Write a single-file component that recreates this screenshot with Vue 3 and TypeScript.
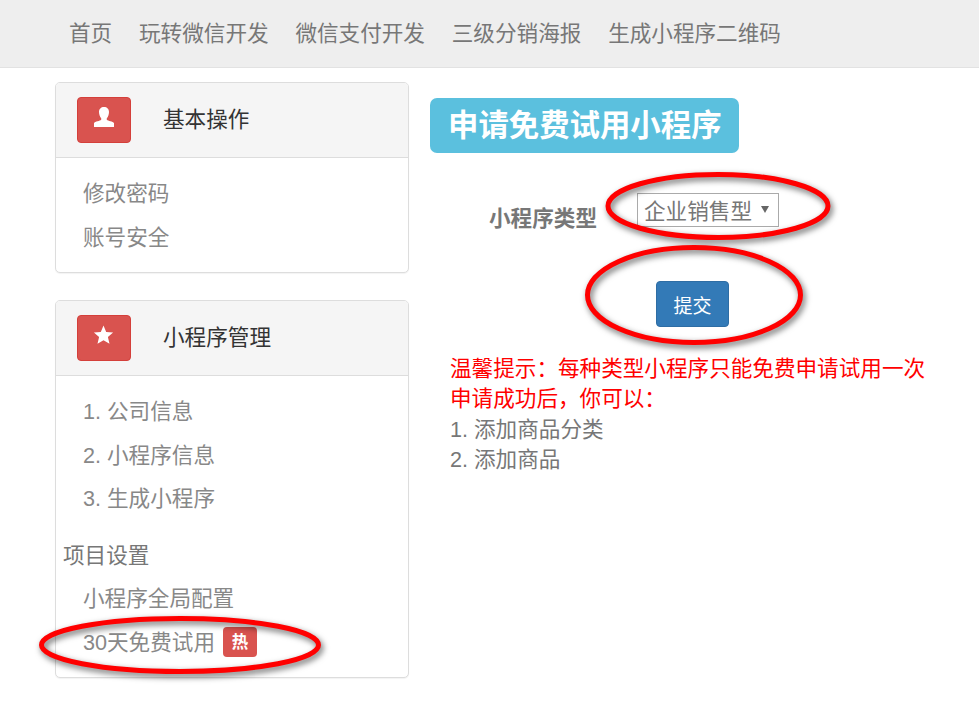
<script setup lang="ts">
const navItems: string[] = ['首页', '玩转微信开发', '微信支付开发', '三级分销海报', '生成小程序二维码']
const basicLinks: string[] = ['修改密码', '账号安全']
const appLinks: string[] = ['1. 公司信息', '2. 小程序信息', '3. 生成小程序']
</script>

<template>
  <div class="page">
    <nav class="navbar">
      <a v-for="item in navItems" :key="item" class="nav-item">{{ item }}</a>
    </nav>

    <div class="content">
      <aside class="sidebar">
        <section class="panel panel-first">
          <header class="panel-head">
            <span class="head-icon">
              <svg class="glyph" width="20" height="20" viewBox="0 0 20 20">
                <path fill="#fff" d="M5 5C5 2 7 0 10 0s5 2 5 5c0 2.500-1 5-2 6-.4.5-.4 1.500 0 2 .8.8 6 1.500 7 3v4H0v-4c1-1.500 6.200-2.200 7-3 .4-.5.4-1.500 0-2C6 10 5 7.500 5 5z" />
              </svg>
            </span>
            <h3 class="panel-title">基本操作</h3>
          </header>
          <ul class="links">
            <li v-for="link in basicLinks" :key="link">{{ link }}</li>
          </ul>
        </section>

        <section class="panel">
          <header class="panel-head">
            <span class="head-icon">
              <svg class="glyph" width="21" height="20" viewBox="0 0 21 20">
                <path fill="#fff" d="M10.500 0.500l2.700 6.400 6.900.6-5.200 4.500 1.600 6.800-6-3.600-6 3.600 1.600-6.800L.9 7.500l6.900-.6z" />
              </svg>
            </span>
            <h3 class="panel-title">小程序管理</h3>
          </header>
          <ul class="links">
            <li v-for="link in appLinks" :key="link">{{ link }}</li>
          </ul>
          <div class="group-title">项目设置</div>
          <ul class="links links-tail">
            <li>小程序全局配置</li>
            <li>30天免费试用<span class="hot">热</span></li>
          </ul>
        </section>
      </aside>

      <main class="main">
        <h1 class="title">申请免费试用小程序</h1>
        <form class="form" @submit.prevent>
          <div class="form-row">
            <label class="form-label" for="app-type">小程序类型</label>
            <div class="select-wrap">
              <select id="app-type" class="select">
                <option>企业销售型</option>
              </select>
            </div>
          </div>
          <button class="submit" type="submit">提交</button>
        </form>
        <div class="notes">
          <p class="warn">温馨提示：每种类型小程序只能免费申请试用一次</p>
          <p class="warn">申请成功后，你可以：</p>
          <p>1. 添加商品分类</p>
          <p>2. 添加商品</p>
        </div>
      </main>
    </div>

    <svg class="marks" width="979" height="715" viewBox="0 0 979 715" aria-hidden="true">
      <ellipse cx="718" cy="206" rx="110" ry="31.500" />
      <ellipse cx="694" cy="295" rx="106.500" ry="47.500" />
      <ellipse cx="180" cy="645" rx="138.500" ry="26.500" />
    </svg>
  </div>
</template>

<style>
html,
body {
  margin: 0;
  background: #fff;
}
</style>

<style scoped>
.page {
  position: relative;
  width: 979px;
  height: 715px;
  overflow: hidden;
  font-family: "Liberation Sans", "Noto Sans CJK SC", sans-serif;
  font-size: 21.6px;
  color: #777;
}
.navbar {
  display: flex;
  align-items: center;
  gap: 26.800px;
  box-sizing: border-box;
  height: 68px;
  padding-left: 69px;
  background: #eee;
  border-bottom: 1px solid #e2e2e2;
}
.nav-item {
  color: #777;
  line-height: 30px;
}
.content {
  display: flex;
  align-items: flex-start;
  padding: 14px 0 0 55px;
}
.sidebar {
  width: 354px;
  flex: none;
}
.panel {
  box-sizing: border-box;
  border: 1px solid #ddd;
  border-radius: 5px;
  box-shadow: 0 1px 1px rgba(0, 0, 0, 0.05);
  background: #fff;
  overflow: hidden;
}
.panel-first {
  margin-bottom: 27px;
}
.panel-head {
  display: flex;
  align-items: center;
  height: 74px;
  padding-left: 21px;
  background: #f5f5f5;
  border-bottom: 1px solid #ddd;
}
.head-icon {
  display: flex;
  justify-content: center;
  width: 54px;
  height: 46px;
  padding: 9px 1px 0 0;
  background: #d9534f;
  border-radius: 4px;
  border: 1px solid #d43f3a;
  box-sizing: border-box;
  margin-top: -1px;
}
.glyph {
  display: block;
}
.panel-title {
  margin: 0 0 0 32px;
  font-size: 21.6px;
  font-weight: 400;
  line-height: 30px;
  color: #333;
}
.links {
  list-style: none;
  margin: 0;
  padding: 14px 0 0 27px;
  color: #888;
}
.links li {
  height: 43.500px;
  line-height: 43.500px;
  display: flex;
  align-items: center;
}
.panel-first .links {
  padding-bottom: 13px;
}
.group-title {
  margin-top: 20px;
  padding-left: 7px;
  line-height: 30px;
  height: 30px;
  color: #777;
}
.links-tail {
  padding-top: 6.500px;
  padding-bottom: 12.500px;
}
.hot {
  display: flex;
  align-items: center;
  justify-content: center;
  width: 34px;
  height: 30px;
  margin-left: 8px;
  background: #d9534f;
  border-radius: 4px;
  color: #fff;
  font-size: 16.500px;
  font-weight: 700;
}
.main {
  flex: 1;
  padding: 16px 0 0 21px;
}
.title {
  display: inline-block;
  margin: 0;
  padding: 0 17px 0 18px;
  height: 55px;
  line-height: 55px;
  background: #5bc0de;
  border-radius: 7px;
  color: #fff;
  font-size: 30.400px;
  font-weight: 700;
}
.form {
  display: flex;
  flex-direction: column;
  align-items: flex-start;
}
.form-row {
  display: flex;
  align-items: flex-start;
  margin-top: 40px;
  padding-left: 59px;
}
.form-label {
  font-weight: 700;
  color: #777;
  width: 148px;
  line-height: 30px;
  padding-top: 11px;
}
.select-wrap {
  position: relative;
  width: 142px;
  height: 34px;
}
.select-wrap::after {
  content: "";
  position: absolute;
  right: 10px;
  top: 13px;
  border-left: 4.500px solid transparent;
  border-right: 4.500px solid transparent;
  border-top: 7px solid #666;
  pointer-events: none;
}
.select {
  appearance: none;
  display: block;
  box-sizing: border-box;
  width: 100%;
  height: 100%;
  margin: 0;
  padding: 2px 0 0 6px;
  background: #fff;
  border: 1px solid #aaa;
  border-radius: 0;
  font: inherit;
  color: #777;
}
.submit {
  margin: 47px 0 0 226px;
  width: 73px;
  height: 46px;
  padding: 0;
  background: #337ab7;
  border: 1px solid #2e6da4;
  border-radius: 4px;
  color: #fff;
  font: inherit;
  font-size: 19px;
}
.notes {
  margin: 27px 0 0 20px;
  line-height: 30.300px;
}
.notes p {
  margin: 0;
  white-space: nowrap;
}
.warn {
  color: #f00;
}
.marks {
  position: absolute;
  left: 0;
  top: 0;
  pointer-events: none;
  filter: drop-shadow(2px 3px 3px rgba(0, 0, 0, 0.6));
}
.marks ellipse {
  fill: none;
  stroke: #f00;
  stroke-width: 5;
}
</style>
